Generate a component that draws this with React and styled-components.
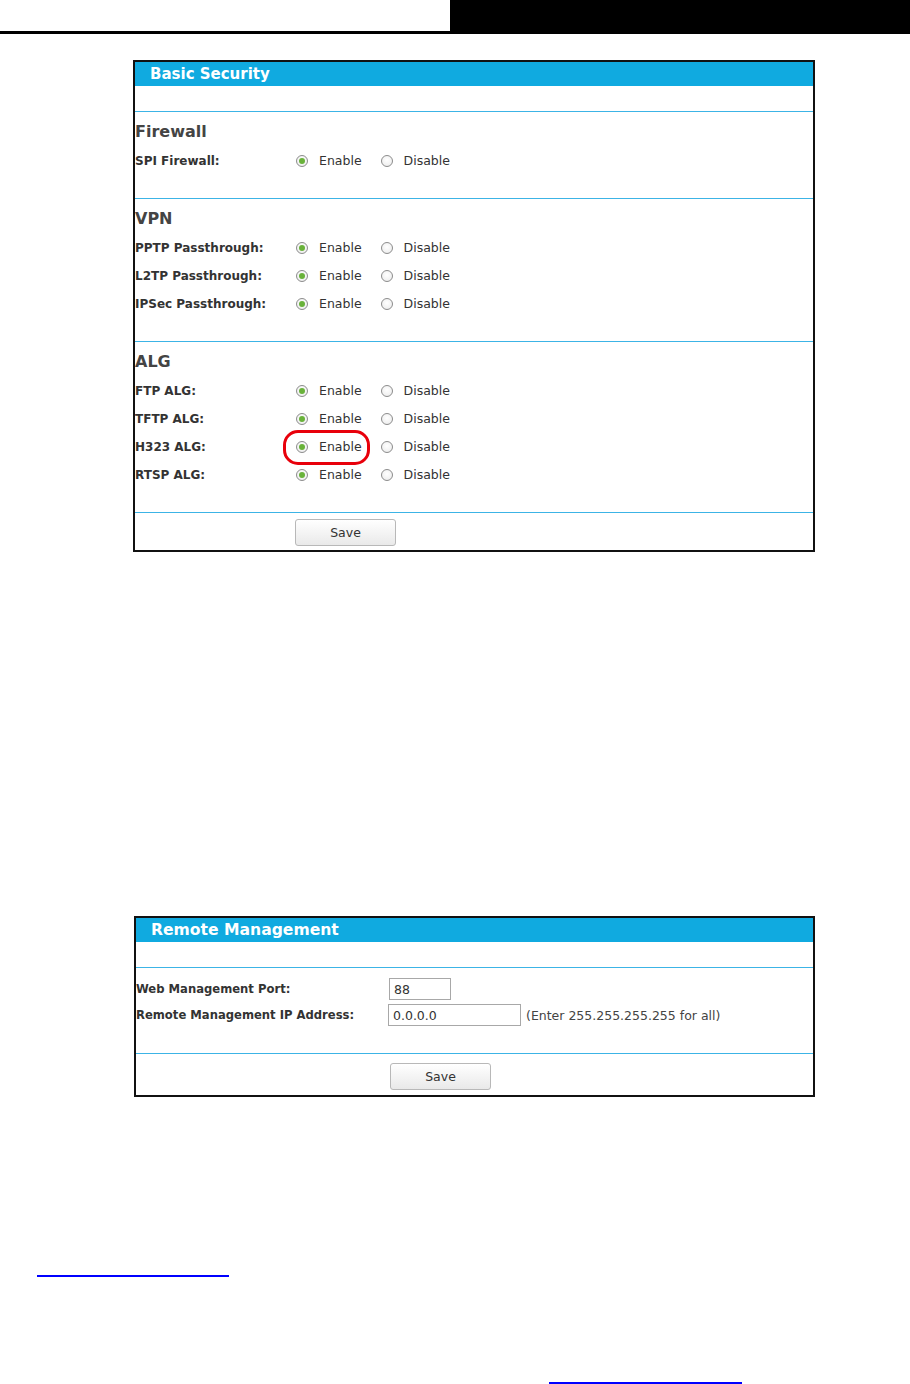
import styled, { createGlobalStyle } from "styled-components";

const BLUE = "#10aae0";
const LINE = "#3cb4e6";
const TEXT = "#333";

const GlobalStyle = createGlobalStyle`
  html, body {
    margin: 0;
    padding: 0;
    background: #fff;
  }
  body {
    width: 910px;
    min-height: 1384px;
    font-family: "DejaVu Sans", Verdana, sans-serif;
    color: ${TEXT};
  }
`;

const TopBar = styled.div`
  display: flex;
  height: 34px;
`;

const TopLeft = styled.div`
  width: 450px;
  box-sizing: border-box;
  border-bottom: 3px solid #000;
`;

const TopRight = styled.div`
  flex: 1;
  background: #000;
`;

const Panel = styled.section`
  box-sizing: border-box;
  width: ${(p) => p.$width}px;
  margin: ${(p) => p.$top}px 0 0 ${(p) => p.$left}px;
  border: 2px solid #111;
  background: #fff;
`;

const PanelTitle = styled.div`
  height: 24px;
  line-height: 24px;
  padding-left: 15px;
  background: ${BLUE};
  color: #fff;
  font-weight: bold;
  font-size: ${(p) => p.$size || 15}px;
`;

const Spacer = styled.div`
  height: 25px;
  border-bottom: 1px solid ${LINE};
`;

const Section = styled.div`
  padding: 10px 0 23px;
  border-bottom: 1px solid ${LINE};
`;

const SectionHeading = styled.h2`
  margin: 0 0 5px;
  height: 20px;
  line-height: 20px;
  font-size: 16px;
  font-weight: bold;
  color: #444;
`;

const Row = styled.div`
  display: grid;
  grid-template-columns: ${(p) => p.$label}px 1fr;
  align-items: center;
  height: ${(p) => p.$height || 28}px;
`;

const Label = styled.span`
  font-size: ${(p) => p.$size || 12}px;
  font-weight: bold;
  color: ${TEXT};
  white-space: nowrap;
`;

const Options = styled.div`
  display: flex;
  align-items: center;
  gap: 19px;
`;

const Option = styled.label`
  position: relative;
  display: flex;
  align-items: center;
  gap: 11px;
  font-size: 12.5px;
  line-height: 14px;
  color: ${TEXT};

  ${(p) =>
    p.$highlight &&
    `
    &::after {
      content: "";
      position: absolute;
      left: -13px;
      right: -8px;
      top: -10px;
      bottom: -11px;
      border: 3px solid #e8000b;
      border-radius: 15px;
      pointer-events: none;
    }
  `}
`;

const Radio = styled.span`
  box-sizing: border-box;
  width: 12px;
  height: 12px;
  border-radius: 50%;
  border: 1px solid #8c8c8c;
  background: radial-gradient(circle at 50% 40%, #fff 0%, #f0f0f0 70%, #dcdcdc 100%);
  display: flex;
  align-items: center;
  justify-content: center;

  &::before {
    content: "";
    width: 6px;
    height: 6px;
    border-radius: 50%;
    background: ${(p) => (p.$checked ? "#69b23a" : "transparent")};
  }
`;

const Footer = styled.div`
  display: grid;
  grid-template-columns: ${(p) => p.$label}px 1fr;
  padding: ${(p) => p.$pad};
`;

const Button = styled.button`
  grid-column: 2;
  box-sizing: border-box;
  width: 101px;
  height: 27px;
  border: 1px solid #b8b8b8;
  border-radius: 3px;
  background: linear-gradient(#ffffff, #e9e9e9);
  font-family: "DejaVu Sans", Verdana, sans-serif;
  font-size: 12.5px;
  color: ${TEXT};
  padding: 0;
`;

const Fields = styled.div`
  display: flex;
  flex-direction: column;
  gap: 4px;
  padding: 10px 0 27px;
  border-bottom: 1px solid ${LINE};
`;

const Input = styled.input`
  box-sizing: border-box;
  width: ${(p) => p.$width}px;
  height: 22px;
  border: 1px solid #a8a8a8;
  padding: 0 4px;
  font-family: "DejaVu Sans", Verdana, sans-serif;
  font-size: 12.5px;
  color: ${TEXT};
  background: #fff;
`;

const FieldCell = styled.div`
  display: flex;
  align-items: center;
  gap: 5px;
`;

const Hint = styled.span`
  font-size: 12.5px;
  color: #444;
  white-space: nowrap;
`;

const LinkLine = styled.a`
  display: block;
  width: ${(p) => p.$width}px;
  margin: ${(p) => p.$top}px 0 0 ${(p) => p.$left}px;
  border-bottom: 2px solid #0000ff;
`;

const sections = [
  { title: "Firewall", rows: [{ label: "SPI Firewall:" }] },
  {
    title: "VPN",
    rows: [
      { label: "PPTP Passthrough:" },
      { label: "L2TP Passthrough:" },
      { label: "IPSec Passthrough:" },
    ],
  },
  {
    title: "ALG",
    rows: [
      { label: "FTP ALG:" },
      { label: "TFTP ALG:" },
      { label: "H323 ALG:", highlight: true },
      { label: "RTSP ALG:" },
    ],
  },
];

const ToggleRow = ({ label, highlight }) => (
  <Row $label={161}>
    <Label>{label}</Label>
    <Options>
      <Option $highlight={highlight}>
        <Radio $checked />
        Enable
      </Option>
      <Option>
        <Radio />
        Disable
      </Option>
    </Options>
  </Row>
);

const App = () => {
  return (
    <>
      <GlobalStyle />
      <TopBar>
        <TopLeft />
        <TopRight />
      </TopBar>

      <Panel $width={682} $top={26} $left={133}>
        <PanelTitle>Basic Security</PanelTitle>
        <Spacer />
        {sections.map((s) => (
          <Section key={s.title}>
            <SectionHeading>{s.title}</SectionHeading>
            {s.rows.map((r) => (
              <ToggleRow key={r.label} label={r.label} highlight={r.highlight} />
            ))}
          </Section>
        ))}
        <Footer $label={160} $pad="6px 0 4px">
          <Button>Save</Button>
        </Footer>
      </Panel>

      <Panel $width={681} $top={364} $left={134}>
        <PanelTitle $size={15.6}>Remote Management</PanelTitle>
        <Spacer />
        <Fields>
          <Row $label={253} $height={22}>
            <Label $size={11.6}>Web Management Port:</Label>
            <FieldCell>
              <Input $width={62} defaultValue="88" />
            </FieldCell>
          </Row>
          <Row $label={252} $height={22}>
            <Label $size={11.6}>Remote Management IP Address:</Label>
            <FieldCell>
              <Input $width={133} defaultValue="0.0.0.0" />
              <Hint>(Enter 255.255.255.255 for all)</Hint>
            </FieldCell>
          </Row>
        </Fields>
        <Footer $label={254} $pad="9px 0 5px">
          <Button>Save</Button>
        </Footer>
      </Panel>

      <LinkLine $width={192} $top={178} $left={37} />
      <LinkLine $width={193} $top={105} $left={549} />
    </>
  );
};

export default App;
